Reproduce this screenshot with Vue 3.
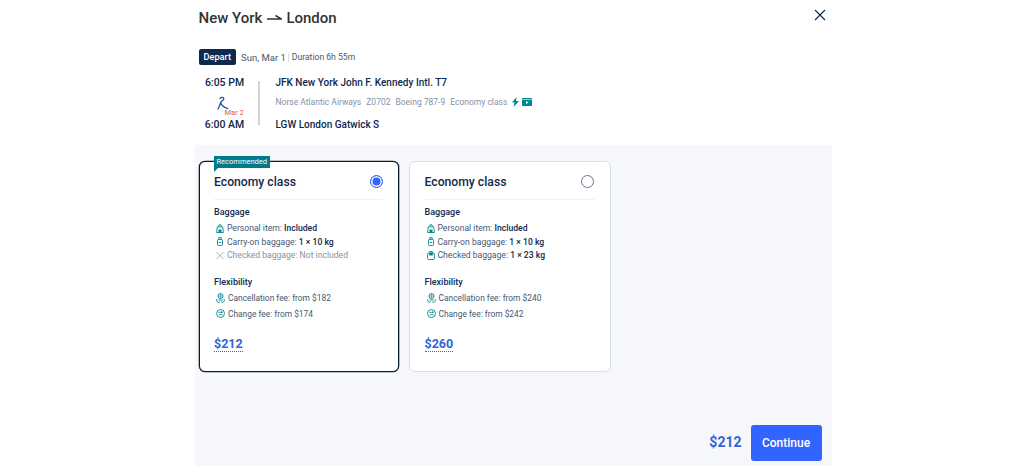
<script setup>
const cards = [
  {
    id: 1,
    selected: true,
    tag: 'Recommended',
    bags: [
      { icon: 'personal', label: 'Personal item: ', value: 'Included' },
      { icon: 'carry', label: 'Carry-on baggage: ', value: '1 × 10 kg' },
      { icon: 'none', label: 'Checked baggage: Not included', value: '', off: true }
    ],
    cancel: '$182',
    change: '$174',
    price: '$212'
  },
  {
    id: 2,
    selected: false,
    tag: '',
    bags: [
      { icon: 'personal', label: 'Personal item: ', value: 'Included' },
      { icon: 'carry', label: 'Carry-on baggage: ', value: '1 × 10 kg' },
      { icon: 'checked', label: 'Checked baggage: ', value: '1 × 23 kg' }
    ],
    cancel: '$240',
    change: '$242',
    price: '$260'
  }
]
</script>

<template>
  <div class="modal">
    <header class="head">
      <h1 class="title">
        New York
        <svg class="arrow" width="15" height="8" viewBox="0 0 15 8">
          <path d="M0 5h14.500L8.500 1.500" fill="none" stroke="#333" stroke-width="1.500" />
        </svg>
        London
      </h1>
      <svg class="close" width="12" height="12" viewBox="0 0 12 12">
        <path d="M1 1l10 10M11 1L1 11" stroke="#0f294d" stroke-width="1.200" fill="none" />
      </svg>
    </header>

    <div class="trip-meta">
      <span class="badge">Depart</span>
      <span>Sun, Mar 1</span>
      <span class="sep"></span>
      <span class="duration">Duration 6h 55m</span>
    </div>

    <div class="segment">
      <div class="times">
        <div class="time">6:05 PM</div>
        <div class="overnight">
          <svg width="12" height="16" viewBox="0 0 12 16">
            <path d="M3 2.500C4 .8 7 1 6.800 3 6.600 4.600 4 5 3.500 6.800 3 8.500 2.500 10 1 13M3.800 7c1 3 3.500 4.500 7 5.500" fill="none" stroke="#1c4f9c" stroke-width="1.300" stroke-linecap="round" />
          </svg>
          <span class="next-day">Mar 2</span>
        </div>
        <div class="time">6:00 AM</div>
      </div>
      <div class="rail"></div>
      <div class="route">
        <div class="airport">JFK New York John F. Kennedy Intl. T7</div>
        <div class="flight">
          <span>Norse Atlantic Airways</span>
          <span>Z0702</span>
          <span>Boeing 787-9</span>
          <span>Economy class</span>
          <span class="perks">
            <svg width="7" height="10" viewBox="0 0 7 10"><path d="M4.500 0L0 5.500h2.500L1.500 10 7 4H4z" fill="#00868f" /></svg>
            <svg width="10" height="8" viewBox="0 0 10 8"><path d="M0 0h10v8H0z" fill="#00868f" /><path d="M0 1.500h10" stroke="#fff" stroke-width=".6" /><path d="M4 3l2.500 1.500L4 6z" fill="#fff" /></svg>
          </span>
        </div>
        <div class="airport">LGW London Gatwick S</div>
      </div>
    </div>

    <section class="fares">
      <div class="cards">
        <article v-for="card in cards" :key="card.id" class="card" :class="{ selected: card.selected }">
          <span v-if="card.tag" class="tag">{{ card.tag }}</span>
          <div class="card-head">
            <span class="card-title">Economy class</span>
            <span class="radio" :class="{ on: card.selected }"></span>
          </div>

          <div class="group-title">Baggage</div>
          <ul class="rows">
            <li v-for="bag in card.bags" :key="bag.icon" :class="{ off: bag.off }">
              <svg class="ico" width="8" height="9" viewBox="0 0 8 9">
                <template v-if="bag.icon === 'personal'">
                  <path d="M2.600 2.500V2a1.400 1.400 0 0 1 2.800 0v.5" fill="none" stroke="#00868f" stroke-width=".9" />
                  <path d="M1.300 2.800h5.400l.7 5.700H.6z" fill="none" stroke="#00868f" stroke-width=".9" />
                  <path d="M2.500 5.500h3v3h-3z" fill="#00868f" />
                </template>
                <template v-else-if="bag.icon === 'carry'">
                  <path d="M2.800 2.500V.5h2.400v2" fill="none" stroke="#00868f" stroke-width=".9" />
                  <rect x="1.500" y="2.500" width="5" height="6" rx=".8" fill="none" stroke="#00868f" stroke-width=".9" />
                  <path d="M2.800 5.500h2.400" stroke="#00868f" stroke-width=".9" />
                </template>
                <template v-else-if="bag.icon === 'checked'">
                  <path d="M2.800 2V.5h2.400V2" fill="none" stroke="#00868f" stroke-width=".9" />
                  <rect x=".6" y="2" width="6.800" height="6.500" rx=".8" fill="none" stroke="#00868f" stroke-width=".9" />
                  <path d="M2.200 2h3.600v2.500H2.200z" fill="#00868f" />
                </template>
                <path v-else d="M.5 1l7 7M7.500 1l-7 7" stroke="#8592a6" stroke-width=".7" fill="none" />
              </svg>
              <span>{{ bag.label }}<b v-if="bag.value">{{ bag.value }}</b></span>
            </li>
          </ul>

          <div class="group-title flex-title">Flexibility</div>
          <ul class="rows tall">
            <li>
              <svg class="ico" width="9" height="10" viewBox="0 0 9 10">
                <circle cx="4.500" cy="3" r="2.500" fill="none" stroke="#00868f" stroke-width=".9" />
                <path d="M4.500 .5v5M2 3h5" stroke="#00868f" stroke-width=".6" />
                <path d="M1.200 6a1.900 1.900 0 1 0 2.600 2.800M7.800 6a1.900 1.900 0 1 1-2.600 2.800M2.500 7h4" fill="none" stroke="#00868f" stroke-width=".9" />
              </svg>
              <span>Cancellation fee: from {{ card.cancel }}</span>
            </li>
            <li>
              <svg class="ico" width="9" height="9" viewBox="0 0 9 9">
                <circle cx="4.500" cy="4.500" r="4" fill="none" stroke="#00868f" stroke-width=".9" />
                <path d="M2.200 3.300h3.800M2.800 5.700h3.800" stroke="#00868f" stroke-width=".8" />
                <path d="M5 2l2 1.300L5 4.200z" fill="#00868f" />
              </svg>
              <span>Change fee: from {{ card.change }}</span>
            </li>
          </ul>

          <div class="price">{{ card.price }}</div>
        </article>
      </div>

      <footer class="foot">
        <span class="total">$212</span>
        <button class="continue" type="button">Continue</button>
      </footer>
    </section>
  </div>
</template>

<style scoped>
.modal {
  width: 637px;
  height: 466px;
  margin: 0 auto;
  display: flex;
  flex-direction: column;
  background: #fff;
  color: #0f294d;
  font-family: Roboto, "Liberation Sans", sans-serif;
  overflow: hidden;
}

.head {
  display: flex;
  justify-content: space-between;
  align-items: flex-start;
  padding: 8px 6px 0 4px;
  height: 49px;
  box-sizing: border-box;
}

.title {
  margin: 0;
  font-size: 15px;
  line-height: 20px;
  font-weight: 500;
  color: #333;
  display: flex;
  align-items: center;
  gap: 4.500px;
}

.arrow {
  margin-top: -1px;
}

.close {
  margin: 1px 0 0;
}

.trip-meta {
  display: flex;
  align-items: center;
  gap: 2.500px;
  height: 16px;
  padding-left: 4px;
  font-size: 9.500px;
  color: #455873;
}

.badge {
  margin-right: 2.500px;
  background: #0f294d;
  color: #fff;
  font-size: 9.200px;
  font-weight: 500;
  padding: 0 5px;
  line-height: 16px;
  border-radius: 2px;
}

.duration {
  font-size: 8.600px;
}

.sep {
  width: 1px;
  height: 9px;
  background: #dadfe6;
}

.segment {
  display: flex;
  padding: 11px 0 0 4px;
  height: 80px;
  box-sizing: border-box;
}

.times {
  width: 52px;
  height: 56px;
  display: flex;
  flex-direction: column;
  justify-content: space-between;
  align-items: center;
  font-size: 10.500px;
  font-weight: 500;
  line-height: 14px;
  color: #0f294d;
}

.overnight {
  position: relative;
  width: 40px;
  padding-left: 12px;
  box-sizing: border-box;
  display: flex;
}

.next-day {
  position: absolute;
  left: 20px;
  top: 12px;
  font-size: 7.500px;
  line-height: 9px;
  font-weight: 400;
  color: #d9652b;
  white-space: nowrap;
}

.rail {
  width: 2px;
  height: 44px;
  margin: 5px 16px 0 7px;
  background: #ced2d9;
}

.route {
  height: 56px;
  display: flex;
  flex-direction: column;
  justify-content: space-between;
}

.airport {
  font-size: 10px;
  line-height: 14px;
  font-weight: 500;
  color: #0f294d;
}

.flight {
  display: flex;
  align-items: center;
  gap: 5px;
  margin-bottom: 5px;
  font-size: 8.500px;
  line-height: 12px;
  color: #8592a6;
}

.perks {
  display: flex;
  align-items: center;
  gap: 3px;
}

.fares {
  flex: 1;
  display: flex;
  flex-direction: column;
  justify-content: space-between;
  background: #f5f7fa;
  padding: 16px 10px 5px 4px;
}

.cards {
  display: flex;
  gap: 10px;
}

.card {
  position: relative;
  width: 200px;
  height: 211px;
  box-sizing: border-box;
  padding: 10px 15px 0 15px;
  background: #fff;
  border: 1px solid #dadfe6;
  border-radius: 6px;
}

.card + .card {
  width: 202px;
}

.card.selected {
  padding-left: 14.500px;
  border-color: #0a1a30;
  box-shadow: 0 0 0 .3px #0a1a30;
}

.tag {
  position: absolute;
  left: 14px;
  top: -6px;
  height: 12px;
  padding: 0 3px;
  background: #00798a;
  color: #fff;
  font-size: 7.500px;
  line-height: 12px;
}

.tag::after {
  content: "";
  position: absolute;
  left: 0;
  top: 12px;
  border-top: 4px solid #00798a;
  border-right: 4px solid transparent;
}

.card-head {
  display: flex;
  justify-content: space-between;
  align-items: center;
  height: 28px;
  padding-bottom: 8px;
  box-sizing: border-box;
  border-bottom: 1px solid #eef1f5;
}

.card-title {
  font-size: 12.200px;
  font-weight: 500;
  color: #0f294d;
}

.radio {
  width: 13px;
  height: 13px;
  box-sizing: border-box;
  border: 1.500px solid #66758c;
  border-radius: 50%;
  background: #fff;
}

.card + .card .radio {
  margin-right: 1px;
}

.radio.on {
  border-color: #3264ff;
  box-shadow: inset 0 0 0 1.500px #fff;
  background: #3264ff;
}

.group-title {
  margin-top: 6px;
  font-size: 9px;
  line-height: 13px;
  font-weight: 500;
  color: #0f294d;
}

.flex-title {
  margin-top: 13.500px;
}

.rows {
  list-style: none;
  margin: 2.500px 0 0;
  padding: 0;
  font-size: 8.600px;
  color: #455873;
}

.rows li {
  display: flex;
  align-items: center;
  gap: 3px;
  height: 13.500px;
  padding-left: 2px;
  white-space: nowrap;
}

.rows li.off {
  color: #8592a6;
}

.rows b {
  font-weight: 500;
  color: #0f294d;
}

.rows.tall {
  margin-top: 1px;
  font-size: 8.400px;
}

.rows.tall li {
  height: 16px;
}

.ico {
  flex: none;
}

.price {
  display: inline-block;
  margin-top: 15px;
  font-size: 12.500px;
  line-height: 14px;
  font-weight: 700;
  color: #3264d8;
  border-bottom: 1px dotted #3264d8;
}

.foot {
  display: flex;
  justify-content: flex-end;
  align-items: center;
  gap: 9px;
}

.total {
  margin-bottom: 3px;
  font-size: 14px;
  font-weight: 700;
  color: #3264d8;
}

.continue {
  width: 71px;
  height: 36px;
  border: none;
  border-radius: 3px;
  background: #3264ff;
  color: #fff;
  font-family: inherit;
  font-size: 12px;
  font-weight: 500;
}
</style>
